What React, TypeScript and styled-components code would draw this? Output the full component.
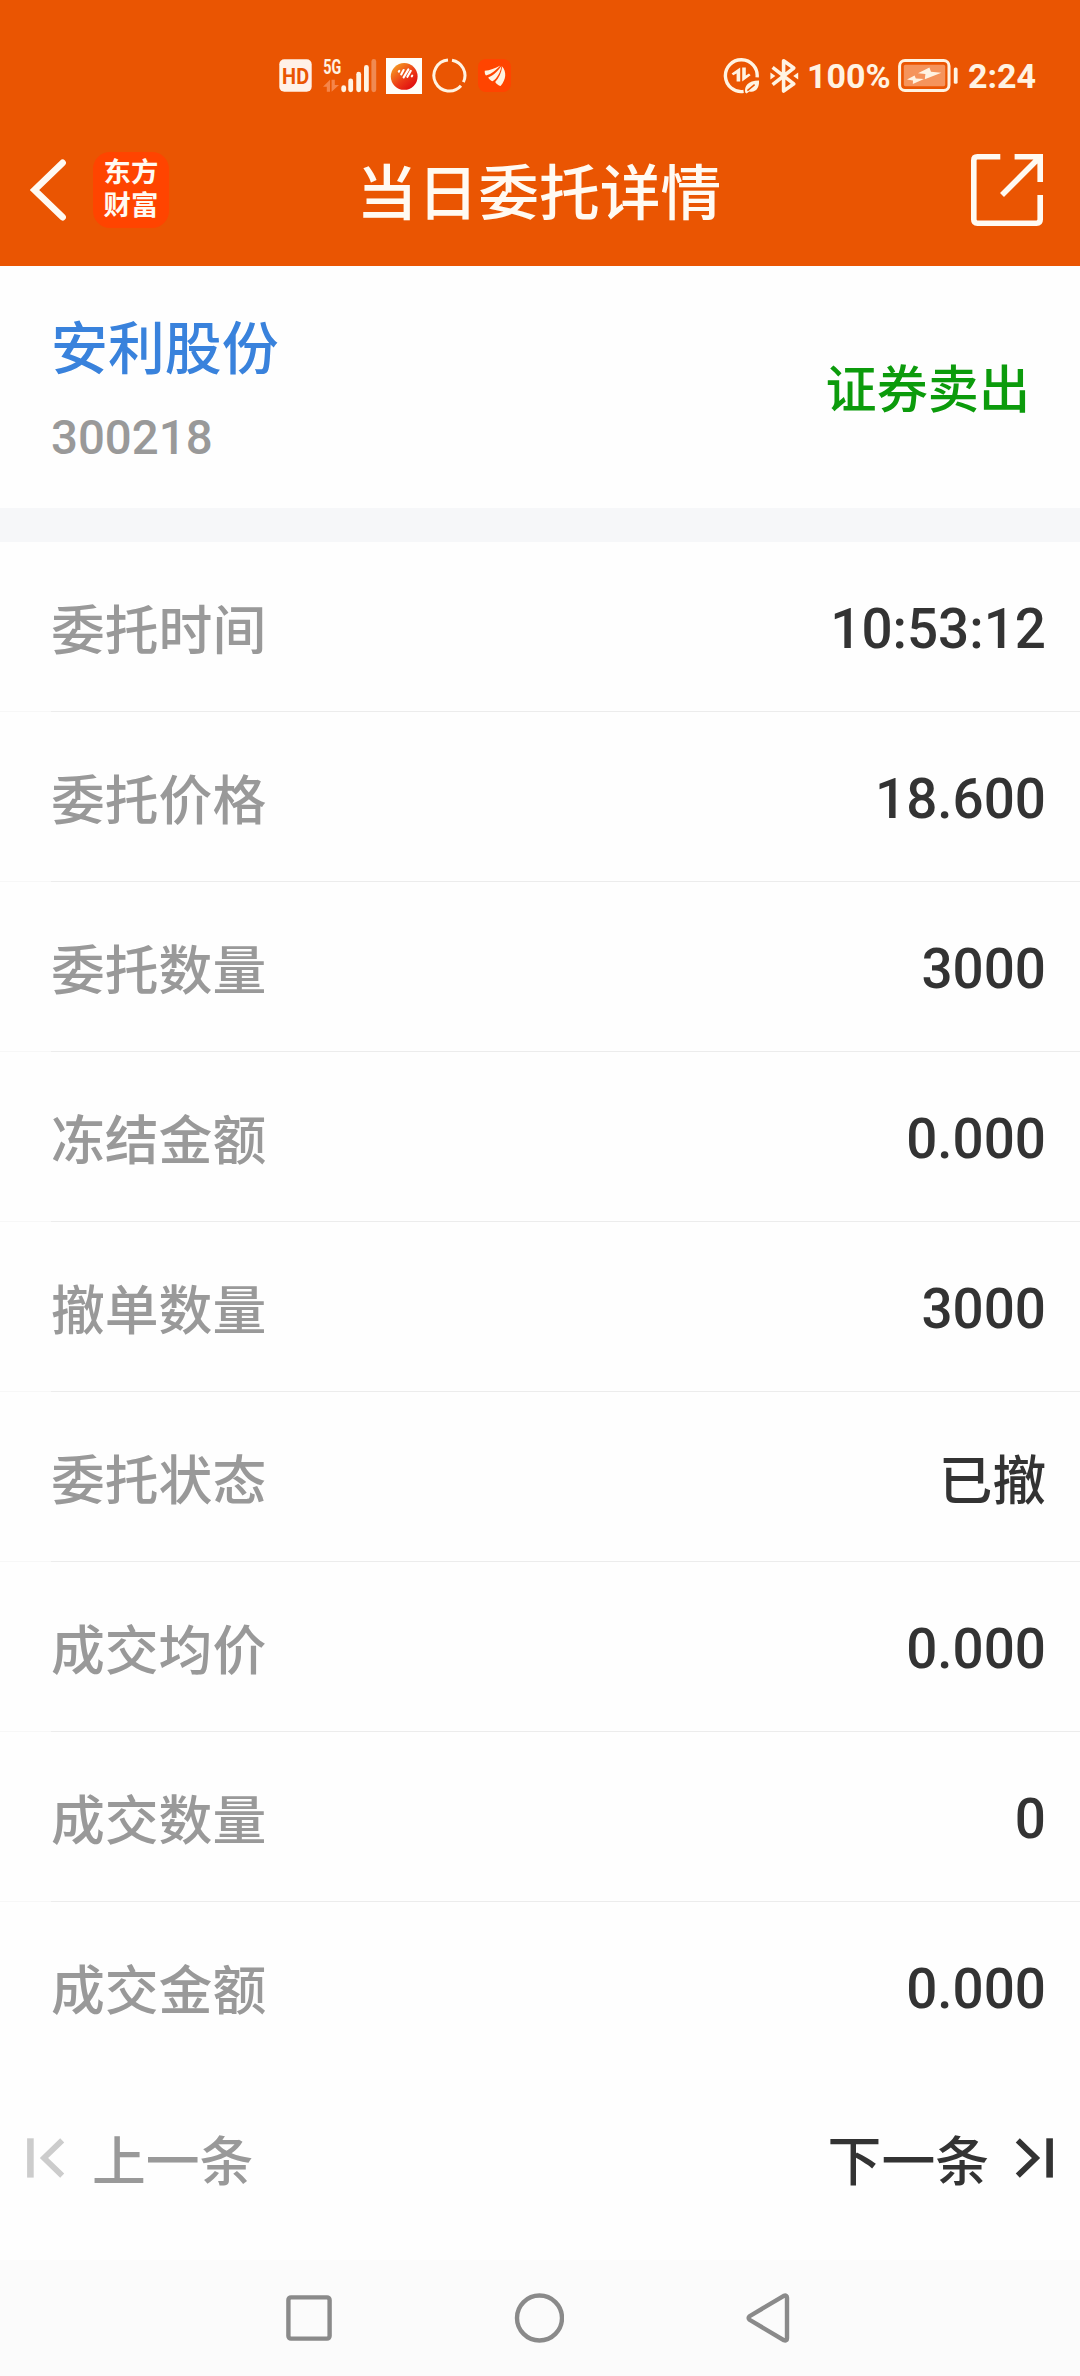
import React from "react";
import styled, { createGlobalStyle } from "styled-components";

const Global = createGlobalStyle`
  * { box-sizing: border-box; }
  body { margin: 0; background: #fff; }
`;

const Screen = styled.div`
  width: 1080px;
  height: 2376px;
  display: flex;
  flex-direction: column;
  background: #fefefe;
  color: #333;
  font-family: Roboto, "Noto Sans CJK SC", sans-serif;
  font-weight: 500;
  overflow: hidden;
`;

const Header = styled.header`
  height: 266px;
  flex: none;
  background: #ea5502;
  color: #fffaf2;
`;

const StatusBar = styled.div`
  height: 112px;
  padding: 39px 42px 0 279px;
  display: flex;
  align-items: center;
  justify-content: space-between;
`;

const Cluster = styled.div`
  display: flex;
  align-items: center;
`;

const Glyph = styled.svg<{ $ml?: number }>`
  display: block;
  flex: none;
  margin-left: ${(p) => p.$ml ?? 0}px;
`;

const StatusText = styled.span<{ $ml: number; $w: number }>`
  width: ${(p) => p.$w}px;
  margin-left: ${(p) => p.$ml}px;
  padding-top: 1px;
  font-size: 34px;
  font-weight: 700;
  line-height: 40px;
  white-space: nowrap;
  color: #fff3e2;
`;

const TitleBar = styled.div`
  height: 154px;
  padding: 2px 37px 0 30px;
  display: grid;
  grid-template-columns: 1fr auto 1fr;
  align-items: center;
`;

const Title = styled.h1`
  margin: 0;
  padding: 10px 0 0 5px;
  font-size: 60.8px;
  line-height: 80px;
  font-weight: 500;
`;

const ShareSlot = styled.div`
  display: flex;
  justify-content: flex-end;
`;

const Logo = styled.div`
  width: 76px;
  height: 76px;
  margin-left: 26px;
  padding-top: 5px;
  border-radius: 17px;
  background: #ff4400;
  font-size: 27.4px;
  line-height: 33px;
  font-weight: 700;
  text-align: center;
`;

const Summary = styled.section`
  height: 242px;
  flex: none;
  padding: 0 50px 0 51px;
  display: flex;
  justify-content: space-between;
  align-items: center;
`;

const StockName = styled.div`
  padding-top: 10px;
  font-size: 56.9px;
  line-height: 80px;
  color: #3982dc;
`;

const StockCode = styled.div`
  margin-top: 12px;
  font-size: 47.4px;
  line-height: 72px;
  color: #999;
`;

const Side = styled.div`
  padding-top: 8px;
  font-size: 51.1px;
  line-height: 72px;
  color: #0c9b0c;
`;

const Divider = styled.div`
  height: 34px;
  flex: none;
  background: #f6f7f9;
`;

const Row = styled.div`
  height: 170px;
  flex: none;
  padding: 10px 34px 0 51px;
  display: flex;
  justify-content: space-between;
  align-items: center;
  background: linear-gradient(90deg, #f7f7f7 51px, #ececec 51px) bottom / 100% 1px no-repeat;
  &:last-child { background: none; }
`;

const Label = styled.span`
  font-size: 53.8px;
  line-height: 80px;
  color: #999;
`;

const Value = styled.span<{ $numeric: boolean }>`
  padding-bottom: ${(p) => (p.$numeric ? 7 : 0)}px;
  font-size: ${(p) => (p.$numeric ? 54.8 : 53.6)}px;
  line-height: 80px;
  color: #333;
`;

const Pager = styled.div`
  height: 188px;
  flex: none;
  padding: 0 27px 16px;
  display: flex;
  justify-content: space-between;
  align-items: center;
`;

const PagerButton = styled.div<{ $muted?: boolean }>`
  display: flex;
  align-items: center;
  gap: ${(p) => (p.$muted ? 27 : 26)}px;
  padding-top: 9px;
  font-size: 53.8px;
  line-height: 80px;
  color: ${(p) => (p.$muted ? "#999" : "#333")};
  svg { margin-top: -10px; }
`;

const SystemNav = styled.nav`
  height: 116px;
  flex: none;
  padding-left: 286px;
  display: flex;
  align-items: center;
  gap: 182px;
  background: #fbfbfb;
`;

const CREAM = "#fff3e2";

const rows: [string, string][] = [
  ["委托时间", "10:53:12"],
  ["委托价格", "18.600"],
  ["委托数量", "3000"],
  ["冻结金额", "0.000"],
  ["撤单数量", "3000"],
  ["委托状态", "已撤"],
  ["成交均价", "0.000"],
  ["成交数量", "0"],
  ["成交金额", "0.000"],
];

const HdIcon = () => (
  <Glyph width="33" height="33" viewBox="0 0 33 33">
    <rect x="0.3" y="0.3" width="32.4" height="32.4" rx="5" fill="#fff1e8" />
    <text x="16.6" y="24.5" fontSize="22.5" fontWeight="700" textAnchor="middle" textLength="27" lengthAdjust="spacingAndGlyphs" fill="#ea5502">HD</text>
  </Glyph>
);

const SignalIcon = () => (
  <Glyph $ml={11} width="54" height="48" viewBox="0 -6 54 48">
    <text x="0.2" y="15.6" fontSize="20.5" fontWeight="700" textLength="18" lengthAdjust="spacingAndGlyphs" fill={CREAM}>5G</text>
    <path d="M7 21.8L0 28.8H3.8V33.8H7ZM8.6 21.8H11.8V27H16L8.6 33.8Z" fill="#f5854a" />
    <g fill={CREAM}>
      <rect x="18.3" y="27.3" width="4.8" height="6.9" rx="2.4" />
      <rect x="25.3" y="20.6" width="4.8" height="13.6" rx="2.4" />
      <rect x="33.3" y="13.8" width="4.8" height="20.4" rx="2.4" />
      <rect x="41" y="7" width="4.8" height="27.2" rx="2.4" />
      <rect x="48.4" y="1" width="4.8" height="33.2" rx="2.4" fill="#f08a52" />
    </g>
  </Glyph>
);

const BallIcon = () => (
  <Glyph $ml={9} width="36" height="36" viewBox="0 0 36 36">
    <defs>
      <linearGradient id="ball" x1="0.1" y1="0.1" x2="0.8" y2="0.9">
        <stop offset="0" stopColor="#f59a22" />
        <stop offset="0.6" stopColor="#ec3a16" />
        <stop offset="1" stopColor="#e01010" />
      </linearGradient>
    </defs>
    <rect width="36" height="36" fill="#fffefa" />
    <circle cx="18.2" cy="18.4" r="13.4" fill="url(#ball)" />
    <path d="M12.8 13.6L13.3 12.8M15.2 16.4L17.6 12M17.6 19.4L22.4 11.4M21.4 18.8L24.8 12.8M25.8 18.4L26.2 17.6" stroke="#fff" strokeWidth="2.1" strokeLinecap="round" />
  </Glyph>
);

const RingIcon = () => (
  <Glyph $ml={10} width="35" height="35" viewBox="0 0 35 35" fill="none" stroke={CREAM} strokeWidth="3">
    <path d="M20 2.2A15.5 15.5 0 0 1 31.4 24.2M29 27.8A15.5 15.5 0 1 1 16 2.1" />
  </Glyph>
);

const WingIcon = () => (
  <Glyph $ml={11} width="33" height="33" viewBox="0 0 33 33">
    <rect width="33" height="33" rx="8" fill="#ff4400" />
    <g fill={CREAM}>
      <path d="M6.8 11.8C12 11.6 17 9.4 22.4 6.6C18.6 10.2 13.6 15.4 8 16.6C6.8 15.2 6.6 13.4 6.8 11.8Z" />
      <path d="M10.2 18.4C15.8 16.4 20 12 23.4 7C22.8 12.4 19.4 19.4 14.6 22.2C12.8 21.6 11 20.2 10.2 18.4Z" />
      <path d="M17.2 23C21 19 23.4 13.4 24.2 7.4C28.6 12.6 28.4 20 22.6 27C20.4 26.4 18.6 25 17.2 23Z" />
    </g>
  </Glyph>
);

const DataSaverIcon = () => (
  <Glyph width="37" height="37" viewBox="0 0 37 37">
    <path d="M20.6 34.4A15.9 15.9 0 1 1 34.1 20.4" fill="none" stroke={CREAM} strokeWidth="3.4" />
    <path d="M17.2 10.4L8.6 16.6L10.2 18.2L13.6 16.4V24.4H17.2ZM19.2 10.4H22.8V18.4L26 16.6L27.6 18.2L19.2 24.4Z" fill={CREAM} />
    <path d="M22.2 35.6C21.2 29.6 24.6 23.6 36 23.6C36.6 31.4 32.4 36 26.2 34.4L23.6 36.4Z" fill={CREAM} />
    <path d="M24.4 33.6L31.6 27.6" stroke="#ea5502" strokeWidth="1.5" />
  </Glyph>
);

const BluetoothIcon = () => (
  <Glyph $ml={10} width="29" height="36" viewBox="0 0 29 36">
    <path d="M2.6 9.4L23.8 25.8L13.6 33V2.8L23.8 10L2.6 26.6" fill="none" stroke={CREAM} strokeWidth="3.6" strokeLinejoin="round" />
    <path d="M0.4 14.4L5.4 18L0.4 21.6ZM28.2 14.4L23.2 18L28.2 21.6Z" fill={CREAM} />
  </Glyph>
);

const BatteryIcon = () => (
  <Glyph width="60" height="33" viewBox="0 0 60 33">
    <rect x="1.6" y="1.6" width="49.4" height="29.8" rx="5.4" fill="none" stroke={CREAM} strokeWidth="3" />
    <rect x="5.8" y="5.8" width="41.4" height="21.4" rx="1.6" fill="#f5945c" />
    <rect x="55.8" y="8.4" width="3.8" height="16.4" rx="1.6" fill={CREAM} />
    <path d="M31.4 8.6L20 14.2L27.4 15L26.8 20.2L43.4 13.8L33 12.8Z" fill={CREAM} />
    <path d="M16.6 16.4L9 20.4L15 21.4L14.8 25L26 20L17.8 19.4Z" fill={CREAM} />
  </Glyph>
);

const BackIcon = () => (
  <Glyph width="37" height="62" viewBox="0 0 37 62" fill="none" stroke="#fffaf2" strokeWidth="6.6">
    <path d="M32.6 3.8L4.6 31L32.6 58.2" strokeLinecap="round" />
  </Glyph>
);

const ShareIcon = () => (
  <Glyph width="72" height="72" viewBox="0 0 72 72" fill="none" stroke="#fffaf2" strokeWidth="5.6">
    <path d="M29.3 2.8H6.4Q2.8 2.8 2.8 6.4V65.6Q2.8 69.2 6.4 69.2H65.6Q69.2 69.2 69.2 65.6V41" />
    <path d="M43.6 2.8H69.2V28M68.4 3.6L31 41" />
  </Glyph>
);

const PrevIcon = () => (
  <Glyph width="38" height="40" viewBox="0 0 38 40" fill="none" stroke="#ccc">
    <path d="M3.4 0.3V39.6" strokeWidth="6.6" />
    <path d="M35.2 2.4L17 20L35.2 37.6" strokeWidth="5.8" />
  </Glyph>
);

const NextIcon = () => (
  <Glyph width="38" height="40" viewBox="0 0 38 40" fill="none" stroke="#333">
    <path d="M34.6 0.3V39.6" strokeWidth="6.6" />
    <path d="M2.8 2.4L21 20L2.8 37.6" strokeWidth="5.8" />
  </Glyph>
);

export default function App() {
  return (
    <Screen lang="zh-CN">
      <Global />
      <Header>
        <StatusBar>
          <Cluster>
            <HdIcon />
            <SignalIcon />
            <BallIcon />
            <RingIcon />
            <WingIcon />
          </Cluster>
          <Cluster>
            <DataSaverIcon />
            <BluetoothIcon />
            <StatusText $ml={8} $w={91}>100%</StatusText>
            <BatteryIcon />
            <StatusText $ml={10} $w={70}>2:24</StatusText>
          </Cluster>
        </StatusBar>
        <TitleBar>
          <Cluster>
            <BackIcon />
            <Logo>东方<br />财富</Logo>
          </Cluster>
          <Title>当日委托详情</Title>
          <ShareSlot><ShareIcon /></ShareSlot>
        </TitleBar>
      </Header>
      <Summary>
        <div>
          <StockName>安利股份</StockName>
          <StockCode>300218</StockCode>
        </div>
        <Side>证券卖出</Side>
      </Summary>
      <Divider />
      <main>
        {rows.map(([label, value]) => (
          <Row key={label}>
            <Label>{label}</Label>
            <Value $numeric={/\d/.test(value)}>{value}</Value>
          </Row>
        ))}
      </main>
      <Pager>
        <PagerButton $muted><PrevIcon />上一条</PagerButton>
        <PagerButton>下一条<NextIcon /></PagerButton>
      </Pager>
      <SystemNav>
        <Glyph width="46" height="46" viewBox="0 0 46 46" fill="none" stroke="#8a8a8a" strokeWidth="4.4">
          <rect x="2.4" y="2.4" width="41.2" height="41.2" rx="2.6" />
        </Glyph>
        <Glyph width="50" height="50" viewBox="0 0 50 50" fill="none" stroke="#8a8a8a" strokeWidth="4.4">
          <circle cx="25.5" cy="25" r="22.5" />
        </Glyph>
        <Glyph width="44" height="50" viewBox="0 0 44 50" fill="none" stroke="#8a8a8a" strokeWidth="4.4">
          <path d="M37.8 2.8L3.6 23.2Q1.6 25 3.6 26.8L37.8 47.2Q41 48.2 41 45.2V4.8Q41 1.8 37.8 2.8Z" />
        </Glyph>
      </SystemNav>
    </Screen>
  );
}
